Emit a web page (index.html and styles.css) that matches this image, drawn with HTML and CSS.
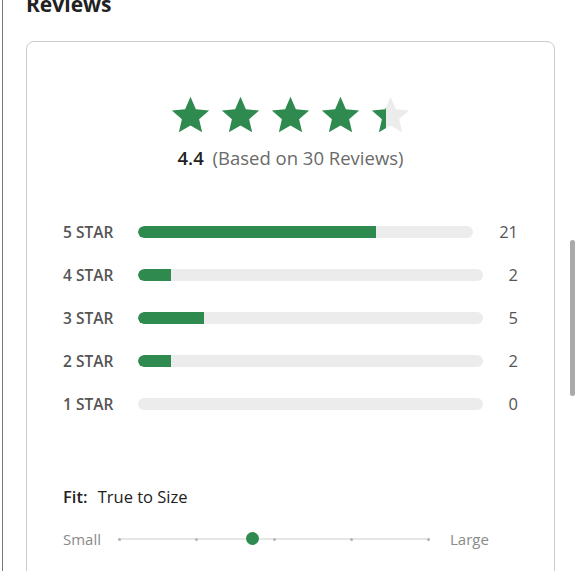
FILE: index.html
```html
<!DOCTYPE html>
<html lang="en">
  <head>
    <meta charset="UTF-8" />
    <meta name="viewport" content="width=device-width, initial-scale=1.0" />
    <title>Reviews</title>
    <link rel="stylesheet" href="styles.css">
  </head>
  <body>
    <div class="page">
      <h2 class="title">Reviews</h2>

      <div class="card">
        <svg width="0" height="0" class="defs">
          <defs>
            <polygon id="star" points="12,1.6 15,8.5 22.4,9.2 16.8,14.1 18.5,21.4 12,17.6 5.5,21.4 7.2,14.1 1.6,9.2 9,8.5" />
            <linearGradient id="partial" x1="0" x2="24" y1="0" y2="0" gradientUnits="userSpaceOnUse">
              <stop offset="0.4" stop-color="#2e8a4e" />
              <stop offset="0.4" stop-color="#ececec" />
            </linearGradient>
          </defs>
        </svg>

        <div class="summary">
          <div class="stars">
            <svg viewBox="0 0 24 24" class="star full"><use href="#star" /></svg>
            <svg viewBox="0 0 24 24" class="star full"><use href="#star" /></svg>
            <svg viewBox="0 0 24 24" class="star full"><use href="#star" /></svg>
            <svg viewBox="0 0 24 24" class="star full"><use href="#star" /></svg>
            <svg viewBox="0 0 24 24" class="star part"><use href="#star" /></svg>
          </div>
          <p class="average"><b>4.4</b> (Based on 30 Reviews)</p>
        </div>

        <div class="breakdown">
          <div class="row">
            <span class="label">5 STAR</span>
            <div class="track"><div class="fill" style="width: 71%"></div></div>
            <span class="count">21</span>
          </div>
          <div class="row">
            <span class="label">4 STAR</span>
            <div class="track"><div class="fill" style="width: 9.6%"></div></div>
            <span class="count">2</span>
          </div>
          <div class="row">
            <span class="label">3 STAR</span>
            <div class="track"><div class="fill" style="width: 19.2%"></div></div>
            <span class="count">5</span>
          </div>
          <div class="row">
            <span class="label">2 STAR</span>
            <div class="track"><div class="fill" style="width: 9.6%"></div></div>
            <span class="count">2</span>
          </div>
          <div class="row">
            <span class="label">1 STAR</span>
            <div class="track"><div class="fill" style="width: 0%"></div></div>
            <span class="count">0</span>
          </div>
        </div>

        <div class="fit">
          <p class="fit-title"><b>Fit:</b> True to Size</p>
          <div class="scale">
            <span class="end">Small</span>
            <div class="line">
              <i></i><i></i><i></i><i></i><i></i>
              <span class="knob" style="left: 43%"></span>
            </div>
            <span class="end">Large</span>
          </div>
        </div>
      </div>
    </div>
    <div class="scrollbar"></div>
  </body>
</html>
```

FILE: styles.css
```css
body {
  margin: 0;
  background: #fff;
  font-family: "Open Sans", Lato, sans-serif;
  color: #333;
  overflow: hidden;
}
.page {
  height: 580px;
  margin-left: 2px;
  border-left: 1px solid #777;
  padding-left: 23px;
  padding-right: 25px;
}
.title {
  margin: -9px 0 0;
  font-size: 21px;
  font-weight: 700;
  color: #222;
  line-height: 26px;
}
.card {
  margin-top: 24px;
  border: 1px solid #ccc;
  border-radius: 8px;
  padding: 52px 36px 60px;
  height: 600px;
}
.defs {
  position: absolute;
}
.summary {
  display: flex;
  flex-direction: column;
  align-items: center;
}
.stars {
  display: flex;
  gap: 7px;
}
.star {
  width: 43px;
  height: 43px;
}
.star.full {
  fill: #2e8a4e;
}
.star.part {
  fill: url(#partial);
}
.average {
  margin: 10px 0 0;
  font-size: 18.5px;
  line-height: 22px;
  color: #6a6a6a;
}
.average b {
  color: #222;
  margin-right: 4px;
  font-weight: 600;
}
.breakdown {
  margin-top: 52px;
  display: flex;
  flex-direction: column;
  gap: 22px;
}
.row {
  display: flex;
  align-items: center;
  height: 21px;
}
.label {
  width: 75px;
  font-size: 15.5px;
  font-weight: 600;
  color: #555;
}
.track {
  flex: 1;
  height: 12px;
  border-radius: 6px;
  background: #ececec;
  overflow: hidden;
}
.fill {
  height: 100%;
  border-radius: 6px 0 0 6px;
  background: #2e8a4e;
}
.count {
  margin-left: 26px;
  font-size: 16.5px;
  color: #555;
}
.fit {
  margin-top: 72px;
}
.fit-title {
  margin: 0;
  font-size: 16.5px;
  line-height: 22px;
  color: #222;
}
.fit-title b {
  margin-right: 6px;
  font-weight: 600;
}
.scale {
  margin-top: 21px;
  display: flex;
  align-items: center;
}
.end {
  font-size: 15px;
  color: #8a8a8a;
}
.line {
  position: relative;
  width: 312px;
  height: 2px;
  margin: 0 20px 0 17px;
  background: #e6e6e6;
  display: flex;
  justify-content: space-between;
  align-items: center;
}
.line i {
  width: 3px;
  height: 3px;
  border-radius: 50%;
  background: #b5b5b5;
}
.knob {
  position: absolute;
  top: -6px;
  width: 13px;
  height: 13px;
  margin-left: -6px;
  border-radius: 50%;
  background: #2e8a4e;
}
.scrollbar {
  position: absolute;
  left: 570px;
  top: 240px;
  width: 5px;
  height: 156px;
  border-radius: 3px;
  background: #aaa;
}
```
